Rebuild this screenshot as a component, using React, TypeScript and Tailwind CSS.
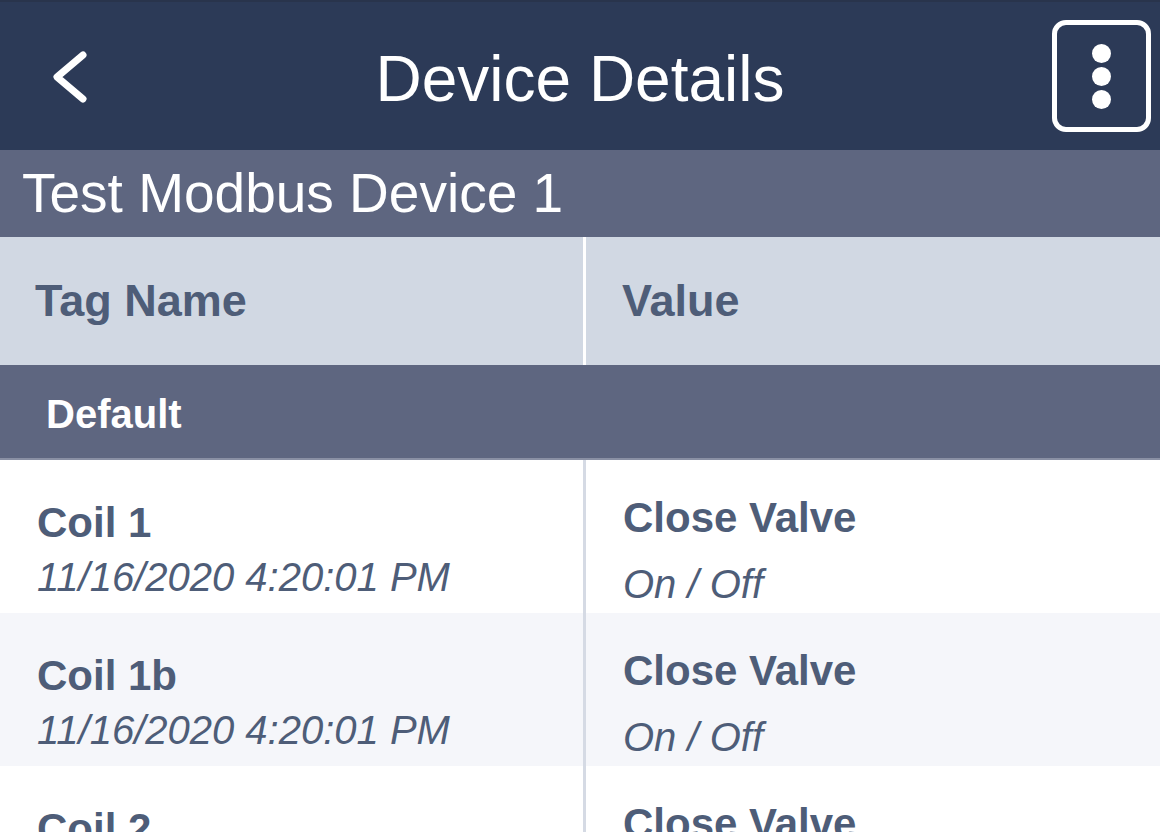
interface TagRow {
  name: string
  updated: string
  value: string
  kind: string
}

const ROWS: TagRow[] = [
  { name: 'Coil 1', updated: '11/16/2020 4:20:01 PM', value: 'Close Valve', kind: 'On / Off' },
  { name: 'Coil 1b', updated: '11/16/2020 4:20:01 PM', value: 'Close Valve', kind: 'On / Off' },
  { name: 'Coil 2', updated: '11/16/2020 4:20:01 PM', value: 'Close Valve', kind: 'On / Off' },
]

function BackChevron() {
  return (
    <svg width="40" height="56" viewBox="0 0 40 56" fill="none">
      <path
        d="M33 6 L7 28 L33 50"
        stroke="white"
        strokeWidth="7"
        strokeLinecap="round"
        strokeLinejoin="round"
      />
    </svg>
  )
}

function MenuButton() {
  return (
    <button className="w-[99px] h-[112px] rounded-[14px] border-[5px] border-white flex flex-col items-center justify-center gap-[4px]">
      <span className="w-[19px] h-[19px] rounded-full bg-white" />
      <span className="w-[19px] h-[19px] rounded-full bg-white" />
      <span className="w-[19px] h-[19px] rounded-full bg-white" />
    </button>
  )
}

function Row({ row, idx }: { row: TagRow; idx: number }) {
  const bg = idx % 2 === 1 ? 'bg-[#f5f6fa]' : 'bg-white'
  return (
    <div className={`flex h-[153px] shrink-0 ${bg}`}>
      <div className="w-[583px] pl-[37px] pt-[39px] text-[#4e5d78]">
        <div className="text-[42px] leading-[48px] font-bold">{row.name}</div>
        <div className="mt-[6px] text-[40px] leading-[48px] italic">{row.updated}</div>
      </div>
      <div className="w-[3px] bg-[#d5dae4]" />
      <div className="flex-1 pl-[37px] pt-[34px] text-[#4e5d78]">
        <div className="text-[42px] leading-[48px] font-bold">{row.value}</div>
        <div className="mt-[18px] text-[40px] leading-[48px] italic">{row.kind}</div>
      </div>
    </div>
  )
}

export default function App() {
  return (
    <div
      className="w-[1160px] h-[832px] overflow-hidden flex flex-col bg-white"
      style={{ fontFamily: '"Liberation Sans", Arial, sans-serif' }}
    >
      {/* nav bar */}
      <div className="h-[150px] shrink-0 bg-[#2c3a57] border-t-2 border-[#29344c] flex items-center">
        <div className="w-[140px] pl-[50px] pt-[2px] flex items-center">
          <BackChevron />
        </div>
        <div className="flex-1 text-center text-white text-[64px] leading-[64px] pt-[6px]">Device Details</div>
        <div className="w-[140px] flex justify-end pr-[9px]">
          <MenuButton />
        </div>
      </div>

      {/* device name */}
      <div className="h-[87px] shrink-0 bg-[#5e6680] flex items-center pl-[22px] text-white text-[55px] leading-none">
        Test Modbus Device 1
      </div>

      {/* column header */}
      <div className="h-[128px] shrink-0 bg-[#d1d8e3] flex text-[#4e5d78] font-bold text-[45px]">
        <div className="w-[583px] flex items-center pl-[35px]">Tag Name</div>
        <div className="w-[3px] bg-white" />
        <div className="flex-1 flex items-center pl-[36px]">Value</div>
      </div>

      {/* group */}
      <div className="h-[95px] shrink-0 bg-[#5e6680] border-b-2 border-[#8a90a4] flex items-center pl-[46px] pt-[5px] text-white font-bold text-[40px]">
        Default
      </div>

      {ROWS.map((row, idx) => (
        <Row key={row.name} row={row} idx={idx} />
      ))}
    </div>
  )
}
